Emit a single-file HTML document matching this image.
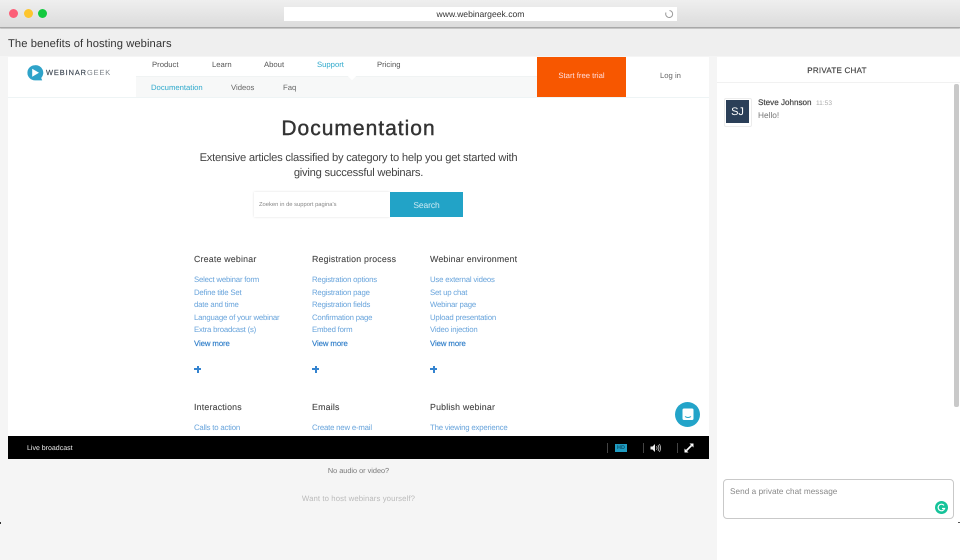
<!DOCTYPE html>
<html><head><meta charset="utf-8"><style>
html,body{margin:0;padding:0}
body{width:960px;height:560px;overflow:hidden;position:relative;background:#f5f5f5;font-family:"Liberation Sans",sans-serif;text-rendering:geometricPrecision}
div,a,svg{position:absolute}
.t{white-space:nowrap;line-height:12px}
.h{font-size:8.8px;color:#444;letter-spacing:.2px;-webkit-text-stroke:.1px #444}
.l{font-size:7.8px;color:#6aa5dc;letter-spacing:-.2px}
.m{font-size:7.8px;color:#2f7ec9;letter-spacing:-.1px;-webkit-text-stroke:.15px #2f7ec9}
.n{font-size:7.7px;color:#555}
.p{width:7px;height:2px;background:#3584d0}
.p:after{content:"";position:absolute;left:2.5px;top:-2.5px;width:2px;height:7px;background:#3584d0}
</style></head><body>
<div style="left:0;top:0;width:960px;height:27px;background:linear-gradient(#efefef,#dcdcdc);border-bottom:1px solid #a8a8a8;box-shadow:0 1px 1px #bbb"></div>
<div style="left:9px;top:9px;width:9px;height:9px;border-radius:50%;background:#fc5f78"></div>
<div style="left:24px;top:9px;width:9px;height:9px;border-radius:50%;background:#fdc52d"></div>
<div style="left:38px;top:9px;width:9px;height:9px;border-radius:50%;background:#13c93f"></div>
<div style="left:284px;top:7px;width:393px;height:14px;background:#fff"></div>
<div class="t" style="left:284px;width:393px;top:8px;text-align:center;font-size:8.6px;color:#333">www.webinargeek.com</div>
<svg style="left:664px;top:9px" width="10" height="10" viewBox="0 0 10 10"><path d="M5.5 1.5A3.5 3.5 0 1 1 2 3.5" fill="none" stroke="#999" stroke-width="1"/></svg>
<div style="left:0;top:29px;width:960px;height:27px;background:#efefef"></div>
<div class="t" style="left:8px;top:38px;font-size:11.2px;color:#333;letter-spacing:.08px">The benefits of hosting webinars</div>

<div style="left:8px;top:57px;width:701px;height:379px;background:#fff;overflow:hidden"></div>
<div style="left:136px;top:76px;width:401px;height:21px;background:#f7f8f8;border-top:1px solid #f0f3f3"></div>
<div style="left:8px;top:97px;width:701px;height:1px;background:#eef4f5"></div>
<svg style="left:26px;top:64px" width="18" height="18" viewBox="0 0 18 18"><path d="M9 1.2A7.6 7.6 0 1 0 9 16.4H16.2L15.2 14A7.6 7.6 0 0 0 9 1.2Z" fill="#2fa3c9"/><path d="M6.2 4.8L13 8.8L6.2 12.8Z" fill="#fff"/></svg>
<div class="t" style="left:46px;top:67px;font-size:7.4px;letter-spacing:.92px;color:#3a4450;-webkit-text-stroke:.15px #3a4450">WEBINAR<span style="color:#777e85;-webkit-text-stroke:0">GEEK</span></div>
<div class="t n" style="left:152px;top:59px">Product</div>
<div class="t n" style="left:212px;top:59px">Learn</div>
<div class="t n" style="left:264px;top:59px">About</div>
<div class="t n" style="left:317px;top:59px;color:#2fa9cc">Support</div>
<div class="t n" style="left:377px;top:59px">Pricing</div>
<div style="left:349px;top:73px;width:6px;height:6px;background:#fff;transform:rotate(45deg)"></div>
<div class="t n" style="left:151px;top:82px;color:#2fa9cc">Documentation</div>
<div class="t n" style="left:231px;top:82px;color:#666">Videos</div>
<div class="t n" style="left:283px;top:82px;color:#666">Faq</div>
<div style="left:537px;top:57px;width:89px;height:40px;background:#f75700"></div>
<div class="t" style="left:537px;width:89px;top:70px;text-align:center;font-size:7.7px;color:#fdd">Start free trial</div>
<div class="t n" style="left:660px;top:70px;color:#666">Log in</div>

<div class="t" style="left:8px;width:701px;top:116px;line-height:26px;text-align:center;font-size:21px;color:#333;letter-spacing:1px;-webkit-text-stroke:.4px #333">Documentation</div>
<div class="t" style="left:8px;width:701px;top:151px;line-height:15px;text-align:center;font-size:11.2px;letter-spacing:-.23px;color:#444">Extensive articles classified by category to help you get started with<br>giving successful webinars.</div>
<div style="left:254px;top:192px;width:136px;height:25px;background:#fff;box-shadow:0 0 2px #ddd"></div>
<div class="t" style="left:259px;top:199px;font-size:5.8px;color:#888">Zoeken in de support pagina's</div>
<div style="left:390px;top:192px;width:73px;height:25px;background:#22a3c7"></div>
<div class="t" style="left:390px;width:73px;top:199px;text-align:center;font-size:8.5px;letter-spacing:-.1px;color:#cdeaf3">Search</div>

<div class="t h" style="left:194px;top:253px">Create webinar</div>
<div class="t h" style="left:312px;top:253px">Registration process</div>
<div class="t h" style="left:430px;top:253px">Webinar environment</div>

<div class="t l" style="left:194px;top:274px">Select webinar form</div>
<div class="t l" style="left:194px;top:287px">Define title Set</div>
<div class="t l" style="left:194px;top:299px">date and time</div>
<div class="t l" style="left:194px;top:312px">Language of your webinar</div>
<div class="t l" style="left:194px;top:324px">Extra broadcast (s)</div>
<div class="t m" style="left:194px;top:338px">View more</div>
<div class="p" style="left:194px;top:368px"></div>

<div class="t l" style="left:312px;top:274px">Registration options</div>
<div class="t l" style="left:312px;top:287px">Registration page</div>
<div class="t l" style="left:312px;top:299px">Registration fields</div>
<div class="t l" style="left:312px;top:312px">Confirmation page</div>
<div class="t l" style="left:312px;top:324px">Embed form</div>
<div class="t m" style="left:312px;top:338px">View more</div>
<div class="p" style="left:312px;top:368px"></div>

<div class="t l" style="left:430px;top:274px">Use external videos</div>
<div class="t l" style="left:430px;top:287px">Set up chat</div>
<div class="t l" style="left:430px;top:299px">Webinar page</div>
<div class="t l" style="left:430px;top:312px">Upload presentation</div>
<div class="t l" style="left:430px;top:324px">Video injection</div>
<div class="t m" style="left:430px;top:338px">View more</div>
<div class="p" style="left:430px;top:368px"></div>

<div class="t h" style="left:194px;top:401px">Interactions</div>
<div class="t h" style="left:312px;top:401px">Emails</div>
<div class="t h" style="left:430px;top:401px">Publish webinar</div>
<div class="t l" style="left:194px;top:422px">Calls to action</div>
<div class="t l" style="left:312px;top:422px">Create new e-mail</div>
<div class="t l" style="left:430px;top:422px">The viewing experience</div>

<div style="left:675px;top:402px;width:25px;height:25px;border-radius:50%;background:#23a4c9"></div>
<svg style="left:682px;top:408px" width="12" height="13" viewBox="0 0 12 13"><rect x="0.5" y="0.5" width="11" height="11.5" rx="1.5" fill="#fff"/><path d="M3 8.5Q6 10.5 9 8.5" fill="none" stroke="#23a4c9" stroke-width="1"/></svg>

<div style="left:8px;top:436px;width:701px;height:23px;background:#000"></div>
<div class="t" style="left:27px;top:443px;font-size:7px;color:#eee">Live broadcast</div>
<div style="left:607px;top:443px;width:1px;height:10px;background:#444"></div>
<div style="left:615px;top:444px;width:12px;height:8px;background:#1f9cc2"></div>
<div class="t" style="left:615px;width:12px;top:442px;text-align:center;font-size:5.5px;font-weight:bold;color:#0c5068">HD</div>
<div style="left:643px;top:443px;width:1px;height:10px;background:#444"></div>
<svg style="left:650px;top:443px" width="12" height="10" viewBox="0 0 12 10"><path d="M0.5 3.5H2.5L5 1V9L2.5 6.5H0.5Z" fill="#eee"/><path d="M6.5 3.2Q7.6 5 6.5 6.8M8 2Q9.8 5 8 8M9.5 1Q11.6 5 9.5 9" fill="none" stroke="#ccc" stroke-width=".8"/></svg>
<div style="left:677px;top:443px;width:1px;height:10px;background:#444"></div>
<svg style="left:684px;top:443px" width="10" height="10" viewBox="0 0 10 10"><path d="M0.5 9.5V5.5L4.5 9.5ZM9.5 0.5V4.5L5.5 0.5Z" fill="#fff"/><path d="M2.5 7.5L7.5 2.5" stroke="#fff" stroke-width="1.6"/></svg>

<div class="t" style="left:8px;width:701px;top:465px;text-align:center;font-size:7.3px;color:#777">No audio or video?</div>
<div class="t" style="left:8px;width:701px;top:493px;text-align:center;font-size:7.8px;color:#bbb;letter-spacing:.08px">Want to host webinars yourself?</div>

<div style="left:0;top:522px;width:1px;height:2px;background:#333"></div>

<div style="left:717px;top:57px;width:243px;height:503px;background:#fff"></div>
<div style="left:717px;top:82px;width:243px;height:1px;background:#f1f1f1"></div>
<div class="t" style="left:717px;width:240px;top:65px;text-align:center;font-size:8px;color:#444;letter-spacing:.25px;-webkit-text-stroke:.2px #444">PRIVATE CHAT</div>
<div style="left:954px;top:84px;width:5px;height:323px;background:#c9c9c9;border-radius:2px"></div>
<div style="left:724px;top:98px;width:26px;height:27px;border:1px solid #ececec;border-radius:2px;background:#fff"></div>
<div style="left:726px;top:100px;width:23px;height:23px;background:#2b3f58"></div>
<div class="t" style="left:726px;width:23px;top:106px;text-align:center;font-size:11px;color:#fff">SJ</div>
<div class="t" style="left:758px;top:97px;font-size:8.1px;color:#444;-webkit-text-stroke:.2px #444">Steve Johnson</div>
<div class="t" style="left:816px;top:98px;font-size:6.6px;color:#aaa">11:53</div>
<div class="t" style="left:758px;top:109px;font-size:8.3px;color:#777">Hello!</div>
<div style="left:723px;top:479px;width:229px;height:38px;border:1px solid #c9c9c9;border-radius:4px;background:#fff"></div>
<div class="t" style="left:730px;top:486px;font-size:8.2px;color:#888;letter-spacing:.05px">Send a private chat message</div>
<div style="left:935px;top:501px;width:13px;height:13px;border-radius:50%;background:#15c39a"></div>
<svg style="left:935px;top:501px" width="13" height="13" viewBox="0 0 13 13"><path d="M9 4.4A3.3 3.3 0 1 0 9.6 7.5H7" fill="none" stroke="#fff" stroke-width="1.2"/></svg>
<div style="left:958px;top:522px;width:2px;height:1px;background:#555"></div>
</body></html>
